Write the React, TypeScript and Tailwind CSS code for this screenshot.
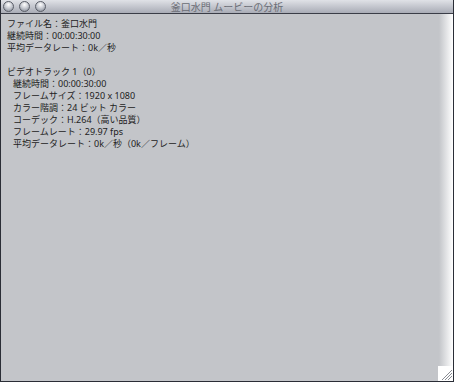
import React from 'react';

const lines = [
  'ファイル名：釜口水門',
  '継続時間：00:00:30:00',
  '平均データレート：0k／秒',
];

const track = [
  '継続時間：00:00:30:00',
  'フレームサイズ：1920 x 1080',
  'カラー階調：24 ビット カラー',
  'コーデック：H.264（高い品質）',
  'フレームレート：29.97 fps',
  '平均データレート：0k／秒（0k／フレーム）',
];

const Light = () => (
  <div className="w-[11px] h-[11px] rounded-full border border-[#5a5e68] bg-[radial-gradient(circle_at_50%_30%,#ffffff_0%,#c9ccd3_45%,#7f8591_100%)]" />
);

const App = () => {
  return (
    <div
      className="w-[454px] h-[382px] flex flex-col bg-[#2a2d36] overflow-hidden"
      style={{ fontFamily: '"Noto Sans", "Noto Sans CJK JP", sans-serif' }}
    >
      {/* タイトルバー */}
      <div className="relative h-[14px] mx-px flex items-center bg-gradient-to-b from-[#e0e2e7] to-[#a9acb6] border-b border-[#3a3d47]">
        <div className="flex gap-[5px] pl-[2px]">
          <Light />
          <Light />
          <Light />
        </div>
        <div className="absolute inset-0 flex items-center justify-center text-[10px] leading-[14px] text-[#6a6d75]">
          釜口水門 ムービーの分析
        </div>
      </div>

      {/* 本文 */}
      <div className="relative flex-1 ml-px mr-px mb-px flex bg-[#c3c5c9]">
        <div className="flex-1 pt-[4px] pl-[6px] text-[9px] leading-[12px] text-[#222]">
          {lines.map((l) => (
            <div key={l}>{l}</div>
          ))}
          <div className="h-[12px]" />
          <div>ビデオトラック 1（0）</div>
          {track.map((l) => (
            <div key={l} className="pl-[6px]">{l}</div>
          ))}
        </div>
        <div className="w-[14px] bg-gradient-to-r from-[#c3c5c9] to-[#ffffff]" />
        <div className="absolute right-0 bottom-0 w-[15px] h-[15px] bg-white overflow-hidden">
          <svg width="15" height="15" viewBox="0 0 15 15">
            <path d="M4 14 L14 4 M7 14 L14 7 M10 14 L14 10" stroke="#8a8d94" strokeWidth="1" />
            <path d="M5 14 L14 5 M8 14 L14 8 M11 14 L14 11" stroke="#ffffff" strokeWidth="1" />
          </svg>
        </div>
      </div>
    </div>
  );
};

export default App;
